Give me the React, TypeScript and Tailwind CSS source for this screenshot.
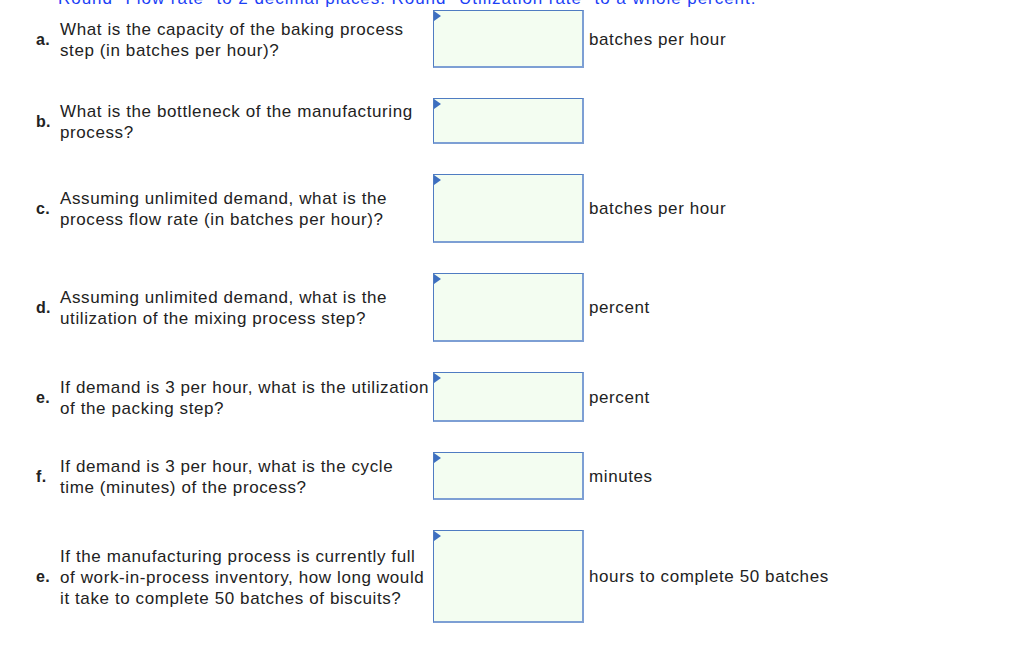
import React from "react";

type Row = {
  label: string;
  lines: string[];
  h: number;
  unit?: string;
};

const rows: Row[] = [
  { label: "a.", lines: ["What is the capacity of the baking process", "step (in batches per hour)?"], h: 58, unit: "batches per hour" },
  { label: "b.", lines: ["What is the bottleneck of the manufacturing", "process?"], h: 46 },
  { label: "c.", lines: ["Assuming unlimited demand, what is the", "process flow rate (in batches per hour)?"], h: 69, unit: "batches per hour" },
  { label: "d.", lines: ["Assuming unlimited demand, what is the", "utilization of the mixing process step?"], h: 69, unit: "percent" },
  { label: "e.", lines: ["If demand is 3 per hour, what is the utilization", "of the packing step?"], h: 50, unit: "percent" },
  { label: "f.", lines: ["If demand is 3 per hour, what is the cycle", "time (minutes) of the process?"], h: 48, unit: "minutes" },
  {
    label: "e.",
    lines: ["If the manufacturing process is currently full", "of work-in-process inventory, how long would", "it take to complete 50 batches of biscuits?"],
    h: 93,
    unit: "hours to complete 50 batches",
  },
];

function Box({ h }: { h: number }) {
  return (
    <div
      className="relative w-[151px] shrink-0 border border-[#4f7cc2] border-r-[#7d9fd4] border-b-[#7d9fd4] border-r-2 border-b-2 bg-[#f3fdf1]"
      style={{ height: h }}
    >
      <svg className="absolute left-0 top-0" width="8" height="10" viewBox="0 0 8 10">
        <polygon points="0,0 7,5 0,10" fill="#3d6fc0" />
      </svg>
    </div>
  );
}

export default function App() {
  return (
    <div className="h-[668px] w-[1024px] overflow-hidden bg-white font-['Liberation_Sans',Arial,sans-serif] text-[17px] tracking-[0.6px] text-[#222222]">
      <div className="mt-[-12px] h-[22px] whitespace-nowrap pl-[58px] leading-[21px] text-[#1b3ff5] tracking-[0.95px]">
        Round "Flow rate" to 2 decimal places. Round "Utilization rate" to a whole percent.
      </div>
      <div className="flex flex-col gap-[30px] pt-0">
        {rows.map((r, i) => (
          <div key={i} className="flex items-center">
            <div className="w-[60px] shrink-0 pl-[36px] text-[16px] font-bold leading-[21px] tracking-[0.3px]">{r.label}</div>
            <div className="w-[373px] shrink-0 pt-[1px] leading-[21px]">
              {r.lines.map((l, j) => (
                <div key={j} className="whitespace-nowrap">{l}</div>
              ))}
            </div>
            <Box h={r.h} />
            {r.unit && <div className="ml-[5px] whitespace-nowrap leading-[21px]">{r.unit}</div>}
          </div>
        ))}
      </div>
    </div>
  );
}
